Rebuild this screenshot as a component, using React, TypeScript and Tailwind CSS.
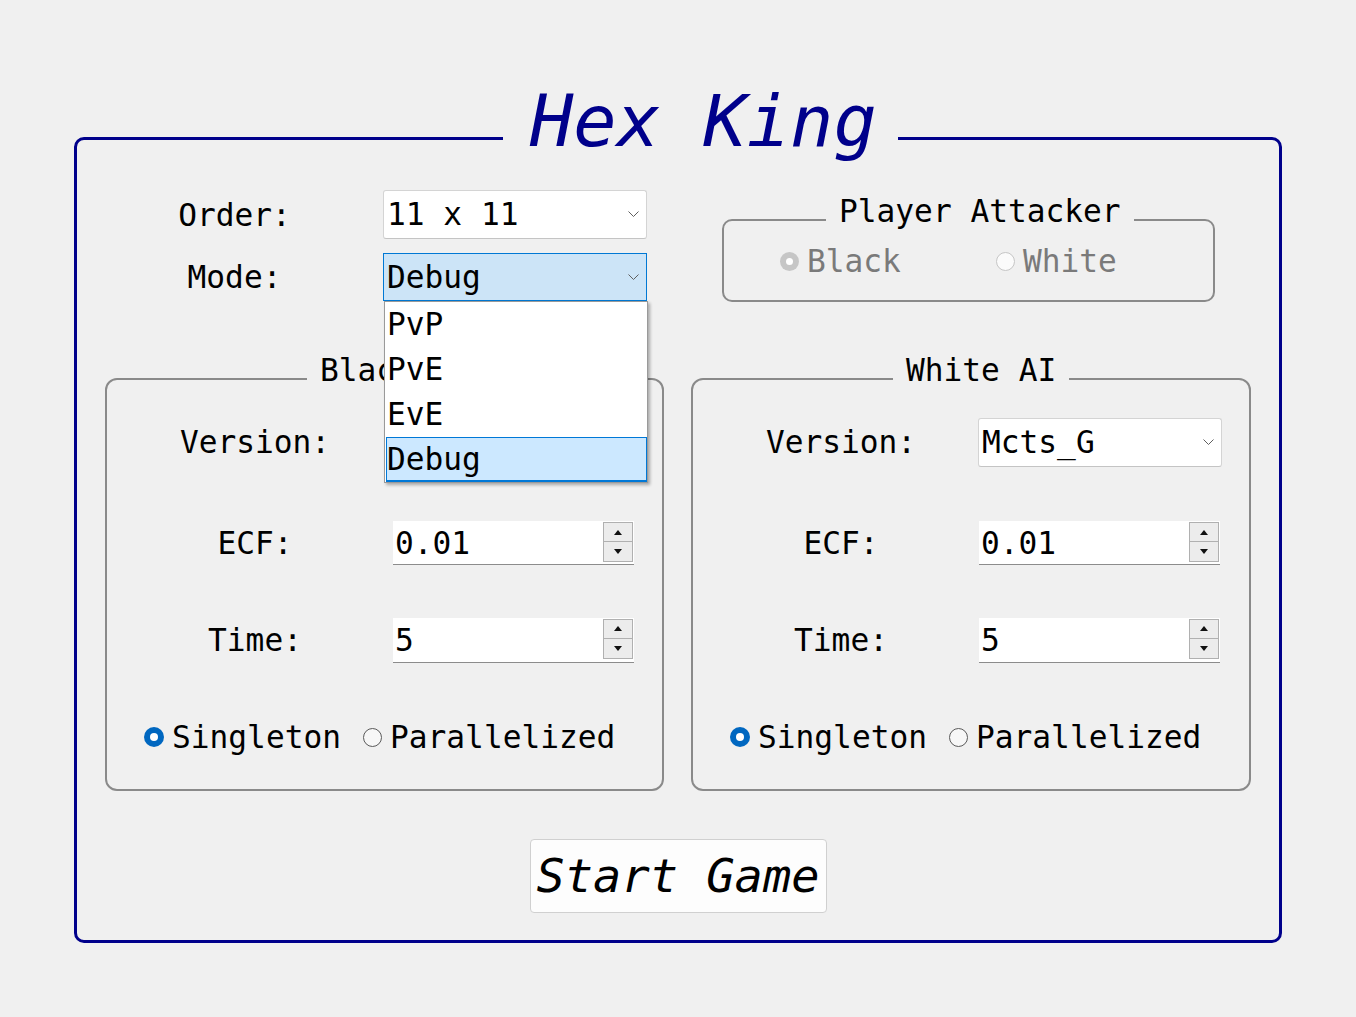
import React from "react";

const F = "font-['DejaVu_Sans_Mono',monospace]";

function Chevron() {
  return (
    <svg width="11" height="7" viewBox="0 0 11 7">
      <polyline points="0.5,0.5 5.5,5.5 10.5,0.5" fill="none" stroke="#5f5f5f" strokeWidth="1" />
    </svg>
  );
}

function Combo({ value }: { value: string }) {
  return (
    <div className="h-[49px] flex items-center justify-between pl-[3px] pr-[7px] bg-white border border-[#d4d4d4] border-b-[#c4c4c4] rounded-[3px]">
      <span>{value}</span>
      <Chevron />
    </div>
  );
}

function Spin({ value, h }: { value: string; h: string }) {
  return (
    <div className={`${h} ml-[1px] w-[241px] flex bg-white border-b border-[#8c8c8c]`}>
      <div className="flex-1 flex items-center pl-[2px]">{value}</div>
      <div className="mt-[1px] mr-[1px] w-[30px] h-[40px] flex flex-col">
        <div className="h-[20px] flex items-center justify-center bg-[#ececec] border border-[#b0b0b0]">
          <svg width="8" height="5" viewBox="0 0 8 5"><polygon points="0,5 4,0 8,5" fill="#111" /></svg>
        </div>
        <div className="h-[20px] flex items-center justify-center bg-[#ececec] border border-t-0 border-[#b0b0b0]">
          <svg width="8" height="5" viewBox="0 0 8 5"><polygon points="0,0 8,0 4,5" fill="#111" /></svg>
        </div>
      </div>
    </div>
  );
}

function Radio({ checked, disabled, label, w }: { checked?: boolean; disabled?: boolean; label: string; w: string }) {
  let circle;
  if (checked && !disabled) {
    circle = (
      <div className="w-[20px] h-[20px] rounded-full bg-[#0067c0] flex items-center justify-center">
        <div className="w-[8px] h-[8px] rounded-full bg-white" />
      </div>
    );
  } else if (checked && disabled) {
    circle = (
      <div className="w-[19px] h-[19px] rounded-full bg-[#c6c6c6] flex items-center justify-center">
        <div className="w-[7px] h-[7px] rounded-full bg-white" />
      </div>
    );
  } else if (disabled) {
    circle = <div className="w-[19px] h-[19px] rounded-full border border-[#c6c6c6] bg-[#fbfbfb]" />;
  } else {
    circle = <div className="w-[19px] h-[19px] rounded-full border border-[#5a5a5a] bg-[#f7f7f7]" />;
  }
  return (
    <div className={`${w} flex items-center gap-[8px] shrink-0`}>
      {circle}
      <span className={disabled ? "text-[#7a7a7a]" : "text-black"}>{label}</span>
    </div>
  );
}

function AIGroup({ title, w, versionValue }: { title: string; w: string; versionValue: string }) {
  return (
    <fieldset className={`${w} h-[436px] border-2 border-[#8a8a8a] rounded-[12px] shrink-0`}>
      <legend className="ml-[200px] px-[13px] pb-[17px] leading-[31px]">{title}</legend>
      <div className="flex flex-col">
        <div className="mt-[15px] pl-[48px] h-[49px] grid grid-cols-[200px_244px] gap-x-[37px] items-center">
          <div className="text-center">Version:</div>
          <Combo value={versionValue} />
        </div>
        <div className="mt-[53px] pl-[48px] h-[44px] grid grid-cols-[200px_245px] gap-x-[37px] items-center">
          <div className="text-center">ECF:</div>
          <Spin value="0.01" h="h-[44px]" />
        </div>
        <div className="mt-[53px] pl-[48px] h-[45px] grid grid-cols-[200px_245px] gap-x-[37px] items-center">
          <div className="text-center">Time:</div>
          <Spin value="5" h="h-[45px]" />
        </div>
        <div className="mt-[57px] pl-[37px] h-[36px] flex items-center">
          <Radio checked label="Singleton" w="w-[219px]" />
          <Radio label="Parallelized" w="w-[260px]" />
        </div>
      </div>
    </fieldset>
  );
}

export default function App() {
  return (
    <div className={`${F} w-[1356px] h-[1017px] bg-[#f0f0f0] text-[31.2px] text-black overflow-hidden pt-[111px] pl-[74px]`}>
      <fieldset className="w-[1208px] h-[832px] border-[3px] border-[#00008b] rounded-[10px]">
        <legend className="ml-[426px] pl-[27px] pr-[21px] pb-[34px] leading-[20px] text-[72px] italic text-[#00008b]">Hex King</legend>
        <div className="flex flex-col">
          <div className="mt-[25px] pl-[73px] flex items-start">
            <div className="grid grid-cols-[169px_264px] gap-x-[64px] gap-y-[14px]">
              <div className="h-[49px] flex items-center justify-center pt-[1px]">Order:</div>
              <Combo value="11 x 11" />
              <div className="h-[48px] flex items-center justify-center">Mode:</div>
              <div className="relative">
                <div className="h-[48px] flex items-center justify-between pl-[3px] pr-[7px] bg-[#cce4f7] border border-[#0078d4]">
                  <span>Debug</span>
                  <Chevron />
                </div>
                <div className="absolute z-10 top-full left-[1px] w-[264px] bg-white border border-[#9a9a9a] shadow-[2px_2px_3px_rgba(0,0,0,0.3)] flex flex-col">
                  <div className="h-[45px] flex items-center pl-[2px]">PvP</div>
                  <div className="h-[45px] flex items-center pl-[2px]">PvE</div>
                  <div className="h-[45px] flex items-center pl-[2px]">EvE</div>
                  <div className="ml-[1px] h-[45px] flex items-center bg-[#cce8ff] border border-[#0078d7] border-b-2">Debug</div>
                </div>
              </div>
            </div>
            <fieldset className="ml-[75px] mt-[6px] w-[493px] h-[106px] border-2 border-[#8a8a8a] rounded-[10px]">
              <legend className="ml-[102px] px-[13px] pb-[17px] leading-[31px]">Player Attacker</legend>
              <div className="h-[34px] pl-[56px] flex items-center">
                <Radio checked disabled label="Black" w="w-[216px]" />
                <Radio disabled label="White" w="w-[200px]" />
              </div>
            </fieldset>
          </div>
          <div className="mt-[53px] pl-[28px] flex gap-[27px]">
            <AIGroup title="Black AI" w="w-[559px]" versionValue="" />
            <AIGroup title="White AI" w="w-[560px]" versionValue="Mcts_G" />
          </div>
          <button className="mt-[48px] mx-auto w-[297px] h-[74px] bg-[#fdfdfd] border border-[#d0d0d0] rounded-[4px] flex items-center justify-center text-[47px] italic text-black">
            Start Game
          </button>
        </div>
      </fieldset>
    </div>
  );
}
